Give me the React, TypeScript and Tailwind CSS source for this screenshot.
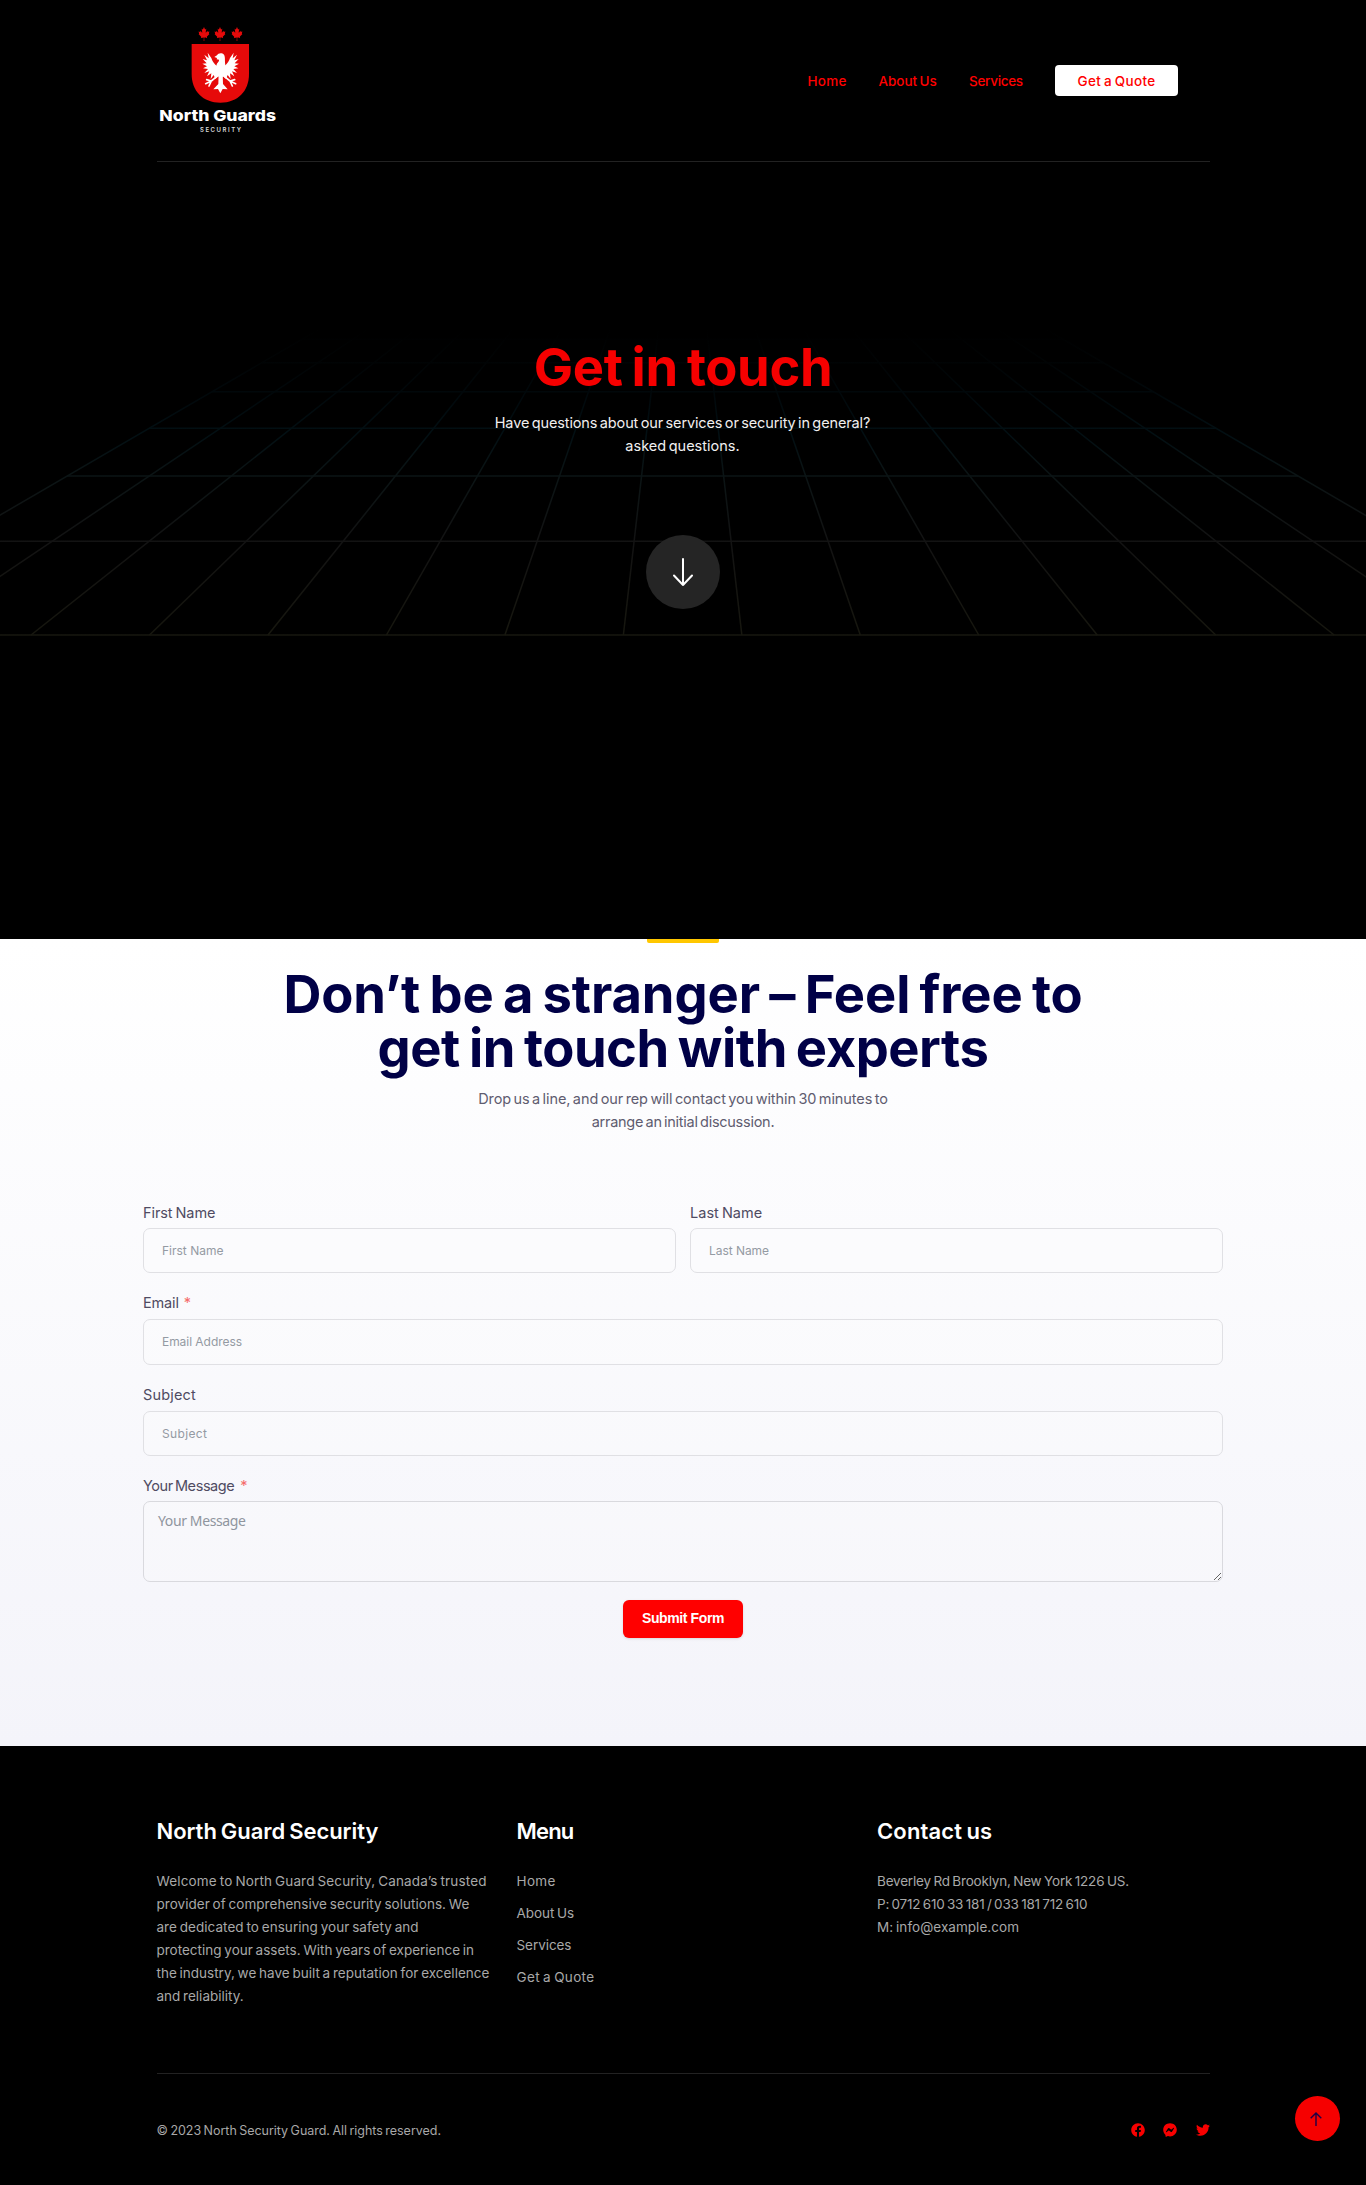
import { FaCanadianMapleLeaf, FaFacebook, FaFacebookMessenger, FaTwitter } from "react-icons/fa";

const rows = [339.3, 362.7, 391.7, 428.3, 476, 541.3, 635];
const columns = [-7.5, -6.5, -5.5, -4.5, -3.5, -2.5, -1.5, -0.5, 0.5, 1.5, 2.5, 3.5, 4.5, 5.5, 6.5, 7.5];

// Distance between two neighbouring floor lines at height y.
const spacing = (y: number) => (y - 117.7) * 0.229;

function PerspectiveGrid() {
  return (
    <svg className="absolute inset-0 h-full w-full" viewBox="0 0 1366 939" fill="none" aria-hidden="true">
      <defs>
        <linearGradient id="floor" gradientUnits="userSpaceOnUse" x1="0" y1="328" x2="0" y2="635">
          <stop offset="0" stopColor="#000000" />
          <stop offset="0.12" stopColor="#010405" />
          <stop offset="0.22" stopColor="#01080b" />
          <stop offset="0.34" stopColor="#020f13" />
          <stop offset="0.48" stopColor="#0b1415" />
          <stop offset="0.7" stopColor="#131313" />
          <stop offset="1" stopColor="#17170f" />
        </linearGradient>
      </defs>
      <g stroke="url(#floor)" strokeWidth="1.5">
        {columns.map((c) => (
          <line key={c} x1={682.6 + c * spacing(328)} y1="328" x2={682.6 + c * spacing(635)} y2="635" />
        ))}
        {rows.map((y) => (
          <path key={y} d={`M${682.6 - 7.5 * spacing(y)} ${y}L${682.7 + 7.5 * spacing(y)} ${y + 0.01}`} />
        ))}
      </g>
    </svg>
  );
}

function EagleHalf() {
  return (
    <>
      <path d="M242 172C232 172 219 160 214 144L203 128L206 145L193 134L201 151L188 147L200 160L187 161L201 169L189 175L204 177L193 189L208 184L201 199L214 190L212 207L221 195L226 207L242 192Z" />
      <path d="M237 194L214 213M214 213L200 209M214 213L197 221M214 213L207 228" stroke="#fff" strokeWidth="5" strokeLinecap="round" fill="none" />
    </>
  );
}

function Logo() {
  return (
    <div className="relative h-[161px] w-[125px]">
      <div className="absolute left-[41px] top-[27px] flex gap-[4.5px] text-[#e60a0a]">
        <FaCanadianMapleLeaf className="h-[14px] w-[12px]" preserveAspectRatio="none" />
        <FaCanadianMapleLeaf className="h-[14px] w-[12px]" preserveAspectRatio="none" />
        <FaCanadianMapleLeaf className="h-[14px] w-[12px]" preserveAspectRatio="none" />
      </div>
      <svg className="absolute left-[-16.5px] top-[10px] h-[160px] w-[160px]" viewBox="0 0 480 480">
        <path d="M155 102H327V192C327 244 293 278 241 278C189 278 155 244 155 192Z" fill="#e60a0a" />
        <g fill="#fff">
          <EagleHalf />
          <g transform="translate(484 0) scale(-1 1)">
            <EagleHalf />
          </g>
          <ellipse cx="242" cy="178" rx="12" ry="26" />
          <path d="M223 141L231 136C234 129 246 127 252 134C257 142 253 154 257 168H229C230 158 238 156 237 149L230 148L231 144Z" />
          <path d="M236 190H248L249 222L263 238L248 237L241 250L234 237L220 238L235 222Z" />
        </g>
        <text x="58" y="333" fill="#fff" fontFamily="Inter, sans-serif" fontWeight="800" fontSize="45" textLength="350" lengthAdjust="spacingAndGlyphs">North Guards</text>
        <text x="180" y="366.500" fill="#d8d8d8" fontFamily="Inter, sans-serif" fontWeight="600" fontSize="18" textLength="123" lengthAdjust="spacing">SECURITY</text>
      </svg>
    </div>
  );
}

function Header() {
  return (
    <header className="relative mx-auto flex h-[162px] w-[1053px] justify-between border-b border-[#222]">
      <Logo />
      <nav className="mr-[31.5px] mt-[65px] flex h-[31px] items-center gap-[31.5px] whitespace-nowrap text-[13.5px] font-medium text-[#ff0000]">
        <a className="w-[39.5px] pt-px tracking-[0.28px]">Home</a>
        <a className="w-[59px] pt-px tracking-[-0.05px] [word-spacing:-1px]">About Us</a>
        <a className="w-[54.5px] pt-px tracking-[-0.3px]">Services</a>
        <a className="flex h-[31px] w-[123px] items-center justify-center rounded bg-white pt-px tracking-[0.3px] [word-spacing:-1px]">Get a Quote</a>
      </nav>
    </header>
  );
}

function Hero() {
  return (
    <section className="relative h-[939px] overflow-hidden bg-black">
      <PerspectiveGrid />
      <Header />
      <div className="relative flex flex-col items-center pt-[178px] text-center">
        <h1 className="text-[52.5px] leading-[54px] font-bold tracking-[-0.35px] text-[#f60000] [word-spacing:-3px]">Get in touch</h1>
        <p className="mt-[17px] mr-px whitespace-nowrap text-[14.5px] leading-[23px] text-[#f0f0f0] [word-spacing:-1.5px]">
          <span className="block tracking-[-0.12px]">Have questions about our services or security in general?</span>
          <span className="block">asked questions.</span>
        </p>
        <a className="mt-[78px] mr-px flex size-[74px] items-center justify-center rounded-full bg-[#252525]">
          <svg className="h-[28px] w-[20px]" viewBox="0 0 20 28" fill="none" stroke="#fff" strokeWidth="2" strokeLinecap="round" strokeLinejoin="round">
            <path d="M10 1V27M1 17.500L10 27L19 17.500" />
          </svg>
        </a>
      </div>
    </section>
  );
}

const label = "block h-[23px] whitespace-nowrap text-[14.5px] leading-[23px] text-[#4f4b62]";
const field = "block w-full rounded-[7px] border border-[#e0e0e4] bg-white/20 px-[18px] text-[12px] outline-none placeholder:text-[#949aa3]";

function ContactForm() {
  return (
    <form className="mx-auto mt-[68px] flex w-[1080px] flex-col">
      <div className="flex gap-[14px]">
        <div className="w-[533px]">
          <label className={`${label} tracking-[-0.08px] [word-spacing:-1px]`}>First Name</label>
          <input className={`${field} mt-[4.5px] h-[45px]`} placeholder="First Name" />
        </div>
        <div className="w-[533px]">
          <label className={`${label} tracking-[0.02px] [word-spacing:-1px]`}>Last Name</label>
          <input className={`${field} mt-[4.5px] h-[45px] tracking-[-0.05px]`} placeholder="Last Name" />
        </div>
      </div>
      <label className={`${label} mt-[17.5px] tracking-[-0.15px]`}>
        Email<span className="ml-[5px] text-[#f56c6c]">*</span>
      </label>
      <input className={`${field} mt-[5.5px] h-[46px] pb-px tracking-[-0.05px]`} placeholder="Email Address" />
      <label className={`${label} mt-[17.5px] tracking-[0.18px]`}>Subject</label>
      <input className={`${field} mt-[5.5px] h-[45px] tracking-[0.36px]`} placeholder="Subject" />
      <label className={`${label} mt-[17.5px] tracking-[-0.42px] [word-spacing:-1.5px]`}>
        Your Message<span className="ml-[6px] text-[#f56c6c]">*</span>
      </label>
      <textarea
        className="mt-[4.5px] block h-[81px] w-full resize rounded-[7px] border border-[#d9d9de] bg-white/20 px-[14px] py-[8px] font-['Noto_Sans',sans-serif] text-[14px] leading-[21px] tracking-[-0.38px] outline-none placeholder:text-[#8f959e]"
        placeholder="Your Message"
      />
      <button type="button" className="mx-auto mt-[18px] h-[38px] w-[120px] rounded-md bg-[#ff0000] pb-px font-['Liberation_Sans',Arial,sans-serif] text-[14px] font-bold tracking-[-0.38px] text-white shadow-sm">
        Submit Form
      </button>
    </form>
  );
}

function Contact() {
  return (
    <section className="h-[807px] bg-linear-to-b from-white to-[#f4f4fa]">
      <div className="mx-auto h-1 w-[72px] rounded-b-[2px] bg-[#ffc700]" />
      <h2 className="mt-[24px] whitespace-nowrap text-center text-[52.5px] leading-[54px] font-bold text-[#000046] [word-spacing:-3px]">
        <span className="block tracking-[-0.12px]">Don’t be a stranger – Feel free to</span>
        <span className="block tracking-[-0.45px]">get in touch with experts</span>
      </h2>
      <p className="mt-[11.5px] whitespace-nowrap text-center text-[14.5px] leading-[23px] text-[#5f5c70] [word-spacing:-1.5px]">
        <span className="block tracking-[-0.09px]">Drop us a line, and our rep will contact you within 30 minutes to</span>
        <span className="block tracking-[-0.26px]">arrange an initial discussion.</span>
      </p>
      <ContactForm />
    </section>
  );
}

function Footer() {
  return (
    <footer className="h-[439px] bg-black pt-[71px] text-[13.5px] leading-[23px] whitespace-nowrap text-[#a8a8a8]">
      <div className="mx-auto flex h-[257px] w-[1053px] border-b border-[#222]">
        <div className="w-[360px]">
          <h3 className="mb-[24px] text-[22px] leading-[29px] font-semibold tracking-[-0.04px] text-white [word-spacing:-1.5px]">North Guard Security</h3>
          <p className="[word-spacing:-1px]">
            <span className="block tracking-[0.15px]">Welcome to North Guard Security, Canada’s trusted</span>
            <span className="block tracking-[0.03px]">provider of comprehensive security solutions. We</span>
            <span className="block tracking-[0.04px]">are dedicated to ensuring your safety and</span>
            <span className="block">protecting your assets. With years of experience in</span>
            <span className="block">the industry, we have built a reputation for excellence</span>
            <span className="block">and reliability.</span>
          </p>
        </div>
        <div className="w-[360.5px]">
          <h3 className="mb-[24px] text-[22px] leading-[29px] font-semibold tracking-[-0.8px] text-white">Menu</h3>
          <ul className="flex flex-col gap-[9px]">
            <li className="tracking-[0.35px]">Home</li>
            <li className="tracking-[-0.05px] [word-spacing:-1px]">About Us</li>
            <li className="tracking-[-0.06px]">Services</li>
            <li className="tracking-[0.35px] [word-spacing:-1px]">Get a Quote</li>
          </ul>
        </div>
        <div>
          <h3 className="mb-[24px] text-[22px] leading-[29px] font-semibold tracking-[0.15px] text-white [word-spacing:-1.5px]">Contact us</h3>
          <p className="[word-spacing:-1px]">
            <span className="block tracking-[-0.2px]">Beverley Rd Brooklyn, New York 1226 US.</span>
            <span className="block tracking-[-0.24px]">P: 0712 610 33 181 / 033 181 712 610</span>
            <span className="block tracking-[0.05px]">M: info@example.com</span>
          </p>
        </div>
      </div>
      <div className="mx-auto mt-[45px] flex w-[1053px] items-center justify-between">
        <p className="text-[12.5px] tracking-[-0.03px] [word-spacing:-1px]">© 2023 North Security Guard. All rights reserved.</p>
        <div className="mb-px flex items-center gap-[18.5px] text-[#f80000]">
          <FaFacebook className="size-[14px]" />
          <FaFacebookMessenger className="size-[14px]" />
          <FaTwitter className="size-[14px]" />
        </div>
      </div>
    </footer>
  );
}

export default function App() {
  return (
    <div className="relative font-[Inter,sans-serif]">
      <Hero />
      <Contact />
      <Footer />
      <a className="absolute right-[26.5px] bottom-[44px] flex size-[45px] items-center justify-center rounded-full bg-[#f60000]">
        <svg className="mr-[2px] h-[14px] w-[12px]" viewBox="0 0 12 14" fill="none" stroke="#1c0046" strokeWidth="1.4">
          <path d="M6 14V1M0.700 6.200L6 1L11.300 6.200" />
        </svg>
      </a>
    </div>
  );
}
